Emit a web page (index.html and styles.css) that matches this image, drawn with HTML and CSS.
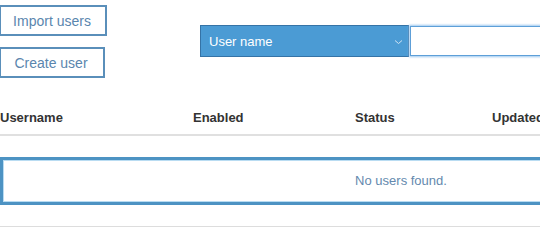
FILE: index.html
```html
<!DOCTYPE html>
<html lang="en">
<head>
  <meta charset="UTF-8">
  <title>Users</title>
  <link rel="stylesheet" href="styles.css">
</head>
<body>
  <div class="toolbar">
    <div class="actions">
      <button class="btn import-btn">Import users</button>
      <button class="btn create-btn">Create user</button>
    </div>
    <div class="search">
      <div class="select">
        <span>User name</span>
        <svg class="chevron" width="9" height="6" viewBox="0 0 9 6">
          <path d="M1 1.5 L4.5 4.5 L8 1.5" fill="none" stroke="#cfe3f3" stroke-width="1"/>
        </svg>
      </div>
      <input class="search-input" type="text">
    </div>
  </div>
  <table class="users-table">
    <colgroup>
      <col style="width:193px">
      <col style="width:162px">
      <col style="width:137px">
      <col>
    </colgroup>
    <thead>
      <tr>
        <th>Username</th>
        <th>Enabled</th>
        <th>Status</th>
        <th>Updated</th>
      </tr>
    </thead>
    <tbody>
      <tr>
        <td colspan="4" class="empty-cell">
          <div class="empty-box">No users found.</div>
        </td>
      </tr>
    </tbody>
  </table>
</body>
</html>
```

FILE: styles.css
```css
body {
  margin: 0;
  font-family: "Liberation Sans", Arial, sans-serif;
  background: #fff;
  width: 802px;
}
.toolbar {
  display: flex;
  align-items: center;
  height: 78px;
}
.actions {
  display: flex;
  flex-direction: column;
  align-items: flex-start;
  gap: 11px;
  padding-top: 5px;
}
.btn {
  font-family: "Liberation Sans", Arial, sans-serif;
  font-size: 14px;
  color: #5a86ae;
  background: #fff;
  border: 2px solid #5a8fba;
  height: 31px;
  padding: 0 6px 0 4px;
  margin-left: -1px;
}
.import-btn {
  width: 108px;
}
.create-btn {
  width: 106px;
}
.search {
  display: flex;
  margin-left: 93px;
  margin-top: 4px;
}
.select {
  display: flex;
  align-items: center;
  justify-content: space-between;
  width: 209px;
  height: 32px;
  box-sizing: border-box;
  padding: 0 5px 0 8px;
  background: #4b9bd4;
  border: 1px solid #3573a6;
  color: #fff;
  font-size: 13px;
}
.chevron {
  margin-top: 1px;
}
.search-input {
  width: 200px;
  height: 30px;
  box-sizing: border-box;
  margin: 1px 0 0 1px;
  border: 1px solid #5d9fd8;
  box-shadow: 0 0 2px 1px #9cc8ef;
  outline: none;
}
.users-table {
  width: 802px;
  margin-top: 22px;
  border-collapse: collapse;
  table-layout: fixed;
}
.users-table th {
  text-align: left;
  font-size: 13px;
  color: #333;
  line-height: 16px;
  padding: 10px 0 8px 0;
  border-bottom: 2px solid #e0e0e0;
}
.empty-cell {
  padding: 21px 0 21px 0;
  border-bottom: 1px solid #ddd;
}
.empty-box {
  border: 3px solid #4d93c3;
  box-shadow: inset 0 0 0 1px #b9dcf2;
  padding: 12px 0 13px 0;
  line-height: 17px;
  font-size: 13px;
  color: #6489ae;
  text-align: center;
}
```
